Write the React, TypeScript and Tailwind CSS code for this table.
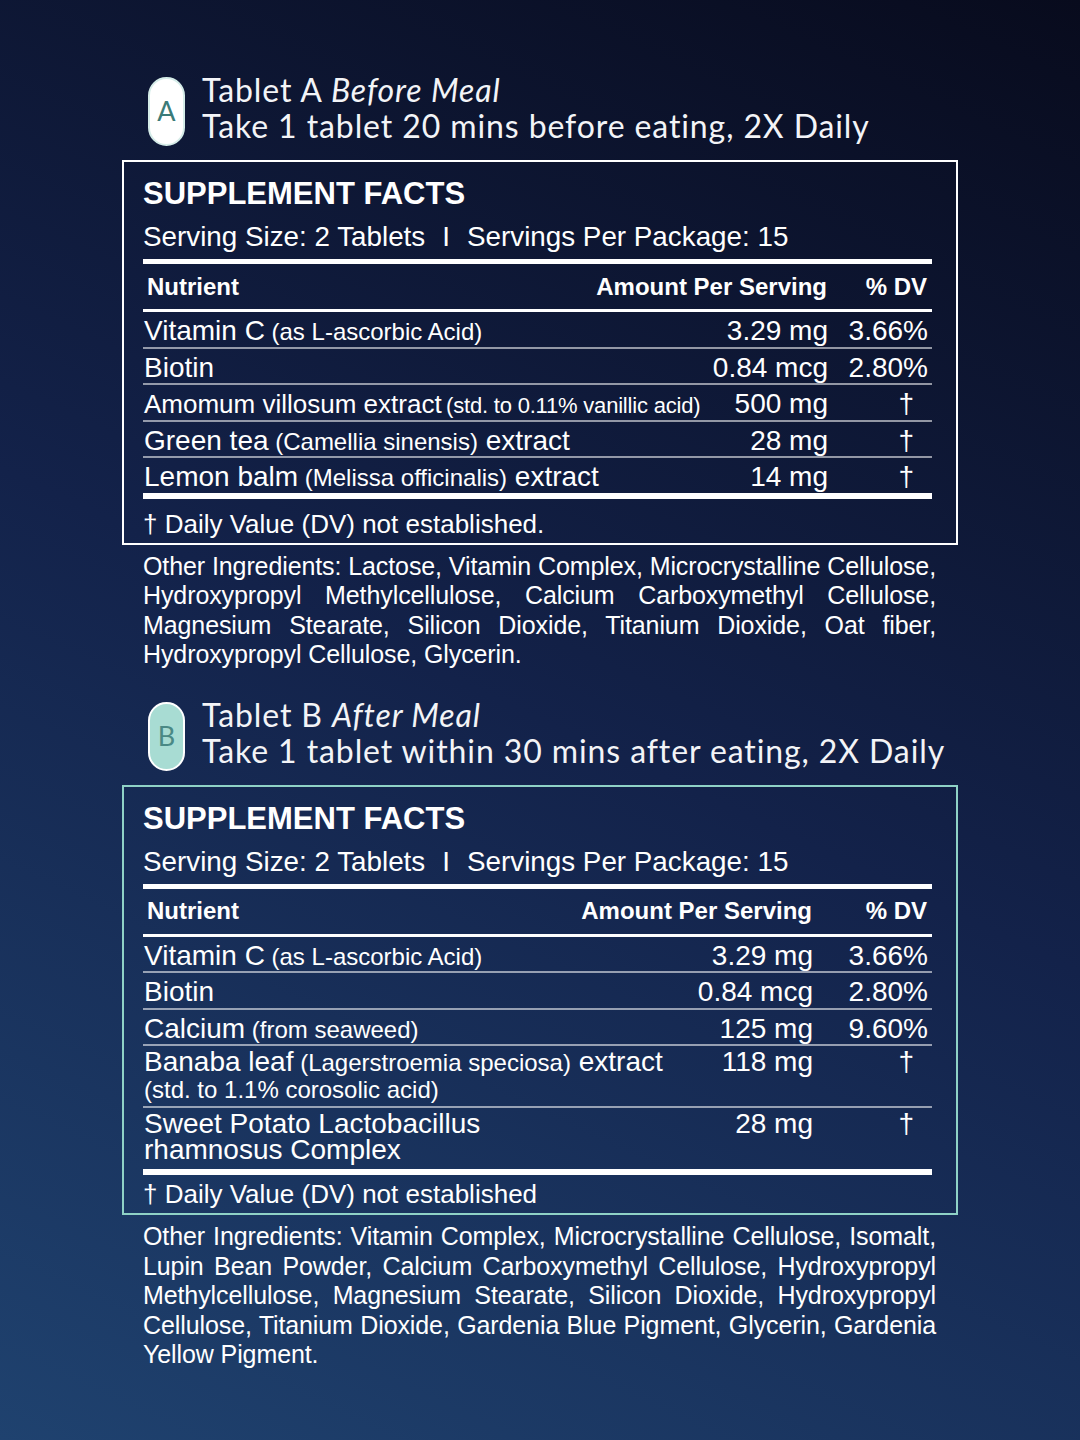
import React from "react";

type Nutrient = {
  name: string;
  note?: string;
  after?: string;
  second?: string;
  amount: string;
  dv: string;
  squeeze?: boolean;
  tallPad?: boolean;
};

type Tablet = {
  letter: string;
  label: string;
  when: string;
  directions: string;
  badge: string;
  frame: string;
  dvCol: string;
  rows: Nutrient[];
  footnote: string;
  footPad: string;
  others: string[];
};

const tablets: Tablet[] = [
  {
    letter: "A",
    label: "Tablet A",
    when: "Before Meal",
    directions: "Take 1 tablet 20 mins before eating, 2X Daily",
    badge: "bg-white border-[#d5ece8] text-[#3b7b78]",
    frame: "border-white",
    dvCol: "w-[104px]",
    rows: [
      { name: "Vitamin C", note: "(as L-ascorbic Acid)", amount: "3.29 mg", dv: "3.66%" },
      { name: "Biotin", amount: "0.84 mcg", dv: "2.80%" },
      {
        name: "Amomum villosum extract",
        note: "(std. to 0.11% vanillic acid)",
        amount: "500 mg",
        dv: "†",
        squeeze: true,
      },
      { name: "Green tea", note: "(Camellia sinensis)", after: "extract", amount: "28 mg", dv: "†" },
      { name: "Lemon balm", note: "(Melissa officinalis)", after: "extract", amount: "14 mg", dv: "†" },
    ],
    footnote: "† Daily Value (DV) not established.",
    footPad: "pt-[6px]",
    others: [
      "Other Ingredients: Lactose, Vitamin Complex, Microcrystalline Cellulose,",
      "Hydroxypropyl Methylcellulose, Calcium Carboxymethyl Cellulose,",
      "Magnesium Stearate, Silicon Dioxide, Titanium Dioxide, Oat fiber,",
      "Hydroxypropyl Cellulose, Glycerin.",
    ],
  },
  {
    letter: "B",
    label: "Tablet B",
    when: "After Meal",
    directions: "Take 1 tablet within 30 mins after eating, 2X Daily",
    badge: "bg-[#a8dcd3] border-white text-[#4a8985]",
    frame: "border-[#8fd2c6]",
    dvCol: "w-[119px]",
    rows: [
      { name: "Vitamin C", note: "(as L-ascorbic Acid)", amount: "3.29 mg", dv: "3.66%" },
      { name: "Biotin", amount: "0.84 mcg", dv: "2.80%" },
      { name: "Calcium", note: "(from seaweed)", amount: "125 mg", dv: "9.60%" },
      {
        name: "Banaba leaf",
        note: "(Lagerstroemia speciosa)",
        after: "extract",
        second: "(std. to 1.1% corosolic acid)",
        amount: "118 mg",
        dv: "†",
      },
      {
        name: "Sweet Potato Lactobacillus",
        second: "rhamnosus Complex",
        amount: "28 mg",
        dv: "†",
        tallPad: true,
      },
    ],
    footnote: "† Daily Value (DV) not established",
    footPad: "pt-0",
    others: [
      "Other Ingredients: Vitamin Complex, Microcrystalline Cellulose, Isomalt,",
      "Lupin Bean Powder, Calcium Carboxymethyl Cellulose, Hydroxypropyl",
      "Methylcellulose, Magnesium Stearate, Silicon Dioxide, Hydroxypropyl",
      "Cellulose, Titanium Dioxide, Gardenia Blue Pigment, Glycerin, Gardenia",
      "Yellow Pigment.",
    ],
  },
];

const NutrientRow = ({ n, dvCol }: { n: Nutrient; dvCol: string }) => {
  const twoLine = !!n.second;
  const dagger = n.dv === "†";
  return (
    <div
      className={
        twoLine
          ? `flex items-start pt-[3px] leading-[26px] ${n.tallPad ? "pb-[6px]" : "pb-[3px]"}`
          : "flex h-[34.5px] items-start pt-[2px] leading-[34.5px]"
      }
    >
      <div className="min-w-0 flex-1 pl-px">
        {n.squeeze ? (
          <div className="whitespace-nowrap">
            <span className="text-[26px]">{n.name}</span>{" "}
            <span className="text-[22px] tracking-[-0.2px]">{n.note}</span>
          </div>
        ) : (
          <div className="whitespace-nowrap text-[28px]">
            {n.name}
            {n.note && <span className="text-[24px]"> {n.note}</span>}
            {n.after && <> {n.after}</>}
            {n.second && (
              <>
                <br />
                <span className={n.note ? "text-[24px]" : ""}>{n.second}</span>
              </>
            )}
          </div>
        )}
      </div>
      <div className="shrink-0 whitespace-nowrap text-right text-[28px]">{n.amount}</div>
      <div
        className={`${dvCol} shrink-0 text-right text-[28px] ${dagger ? "pr-[18px]" : "pr-[4px]"}`}
      >
        {n.dv}
      </div>
    </div>
  );
};

const FactsPanel = ({ t }: { t: Tablet }) => (
  <div className={`border-2 ${t.frame} pl-[19px] pr-[24px] pt-[14px]`}>
    <h2 className="text-[31px] font-bold leading-[36px]">SUPPLEMENT FACTS</h2>
    <p className="mt-[8px] whitespace-nowrap text-[27.8px] leading-[34px]">
      Serving Size: 2 Tablets<span className="mx-[17px]">I</span>Servings Per Package: 15
    </p>
    <div className="mt-[5px] h-[5px] bg-white" />
    <div className="flex h-[45px] items-center text-[24px] font-bold">
      <div className="flex-1 pl-[4px]">Nutrient</div>
      <div className="pr-px text-right">Amount Per Serving</div>
      <div className={`${t.dvCol} pr-[5px] text-right`}>% DV</div>
    </div>
    <div className="h-[3px] bg-white" />
    {t.rows.map((n, i) => (
      <div key={n.name}>
        {i > 0 && <div className="h-[2px] bg-white/55" />}
        <NutrientRow n={n} dvCol={t.dvCol} />
      </div>
    ))}
    <div className="h-[6px] bg-white" />
    <p className={`${t.footPad} text-[26px] leading-[38px]`}>{t.footnote}</p>
  </div>
);

const TabletSection = ({ t, first }: { t: Tablet; first: boolean }) => (
  <section className={first ? "" : "mt-[27px]"}>
    <div className="flex items-start gap-[17px] pl-[26px]">
      <div
        className={`mt-[5px] flex h-[69px] w-[37px] shrink-0 items-center justify-center rounded-full border-2 ${t.badge} font-['Lato',sans-serif] text-[27px]`}
      >
        {t.letter}
      </div>
      <div className="whitespace-nowrap font-['Lato',sans-serif] text-[32px] leading-[36px] tracking-[0.9px] text-[#f3f4f7]">
        <div>
          {t.label} <span className="italic">{t.when}</span>
        </div>
        <div>{t.directions}</div>
      </div>
    </div>
    <div className="mt-[14px]">
      <FactsPanel t={t} />
    </div>
    <div className="mt-[7px] pl-[21px] pr-[22px] text-[25px] leading-[29.5px] tracking-[-0.1px]">
      {t.others.map((line, i) => (
        <div
          key={i}
          className={
            i < t.others.length - 1
              ? "whitespace-nowrap text-justify [text-align-last:justify]"
              : "whitespace-nowrap"
          }
        >
          {line}
        </div>
      ))}
    </div>
  </section>
);

export default function App() {
  return (
    <div className="min-h-[1440px] w-full bg-linear-[205deg] from-[#080b1d] via-[#13224a] to-[#1f426f] font-['Liberation_Sans',Arial,sans-serif] text-white">
      <div className="mx-auto w-[836px] pt-[72px]">
        {tablets.map((t, i) => (
          <TabletSection key={t.letter} t={t} first={i === 0} />
        ))}
      </div>
    </div>
  );
}
